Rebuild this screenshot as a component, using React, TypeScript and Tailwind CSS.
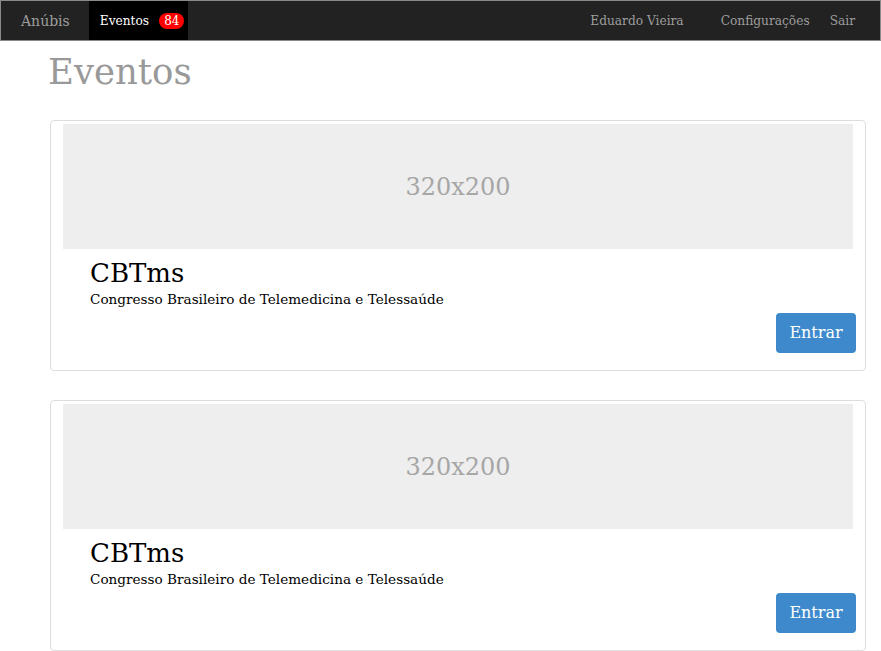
export default function App() {
  const events = [
    { id: 1, title: "CBTms", subtitle: "Congresso Brasileiro de Telemedicina e Telessaúde" },
    { id: 2, title: "CBTms", subtitle: "Congresso Brasileiro de Telemedicina e Telessaúde" },
  ];

  return (
    <div className="min-h-screen bg-white font-['DejaVu_Serif',serif] text-black">
      <nav className="flex h-[41px] items-stretch border border-[#8a8a8a] bg-[#222222] pt-[1px] text-[12.2px]">
        <a className="flex items-center pl-[20px] pr-[19px] text-[14px] text-[#9d9d9d]">Anúbis</a>
        <a className="-mt-[1px] flex items-center gap-[10px] bg-black pl-[11px] pr-[4px] pt-[1px] text-white">
          Eventos
          <span className="rounded-full bg-[#ff0000] px-[5px] text-[12px] leading-[16px] text-white">84</span>
        </a>
        <div className="ml-auto flex items-center pr-[25px] text-[#9d9d9d]">
          <a>Eduardo Vieira</a>
          <a className="ml-[37px]">Configurações</a>
          <a className="ml-[20px]">Sair</a>
        </div>
      </nav>

      <main className="ml-[50px] w-[816px]">
        <h1 className="-ml-[2px] mt-[11px] text-[35.5px] leading-[40px] text-[#999999]">Eventos</h1>

        <div className="mt-[28px] flex flex-col gap-[29px]">
          {events.map((ev) => (
            <div key={ev.id} className="rounded-[4px] border border-[#dddddd] pt-[3px] pb-[17px]">
              <div className="mx-[12px] flex h-[125px] items-center justify-center bg-[#eeeeee] text-[24px] text-[#a6a6a6]">
                320x200
              </div>
              <div className="pl-[39px] pr-[9px] pt-[8px]">
                <h3 className="text-[26px] leading-[32px]">{ev.title}</h3>
                <p className="text-[13.6px] leading-[20px]">{ev.subtitle}</p>
                <div className="mt-[4px] flex justify-end">
                  <button
                    type="button"
                    className="h-[40px] w-[80px] rounded-[4px] bg-[#3d89cc] text-[16px] text-white"
                  >
                    Entrar
                  </button>
                </div>
              </div>
            </div>
          ))}
        </div>
      </main>
    </div>
  );
}
